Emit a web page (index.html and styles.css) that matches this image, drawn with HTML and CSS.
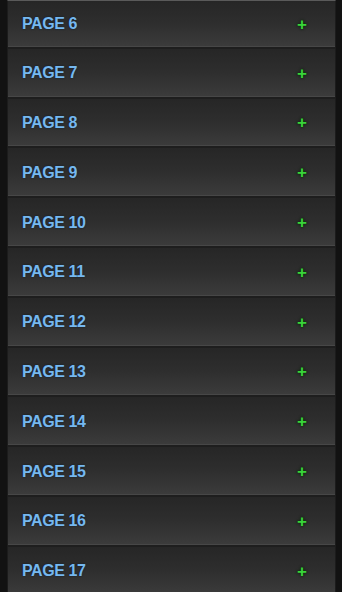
FILE: index.html
```html
<!DOCTYPE html>
<html lang="en">
<head>
    <meta charset="UTF-8">
    <meta name="viewport" content="width=device-width, initial-scale=1.0">
    <title>Pages</title>
    <link rel="stylesheet" href="styles.css">
</head>
<body>
    <div class="page-list">
        <div class="item"><span class="title">PAGE 6</span><span class="plus">+</span></div>
        <div class="item"><span class="title">PAGE 7</span><span class="plus">+</span></div>
        <div class="item"><span class="title">PAGE 8</span><span class="plus">+</span></div>
        <div class="item"><span class="title">PAGE 9</span><span class="plus">+</span></div>
        <div class="item"><span class="title">PAGE 10</span><span class="plus">+</span></div>
        <div class="item"><span class="title">PAGE 11</span><span class="plus">+</span></div>
        <div class="item"><span class="title">PAGE 12</span><span class="plus">+</span></div>
        <div class="item"><span class="title">PAGE 13</span><span class="plus">+</span></div>
        <div class="item"><span class="title">PAGE 14</span><span class="plus">+</span></div>
        <div class="item"><span class="title">PAGE 15</span><span class="plus">+</span></div>
        <div class="item"><span class="title">PAGE 16</span><span class="plus">+</span></div>
        <div class="item"><span class="title">PAGE 17</span><span class="plus">+</span></div>
    </div>
</body>
</html>
```

FILE: styles.css
```css
body {
    margin: 0;
    height: 100vh;
    overflow: hidden;
    background-color: #121212;
    font-family: "Liberation Sans", Arial, sans-serif;
}

/* Page list */
.page-list {
    margin: 0 6px 0 7px;
    background-color: #1e1e1e;
    border-top: 1px solid #5a5a5a;
    border-left: 1px solid #1c1c1c;
    border-right: 1px solid #1c1c1c;
}
.page-list .item {
    display: flex;
    align-items: center;
    justify-content: space-between;
    box-sizing: border-box;
    height: 47.8px;
    padding: 2px 28px 0 14px;
    background: linear-gradient(to bottom, #262626 0%, #2e2e2e 50%, #3b3b3b 100%);
    border-bottom: 1px solid #474747;
    margin-bottom: 2px;
}
.page-list .item:first-child {
    height: 45.8px;
}
.page-list .item .title {
    color: #76b8ef;
    font-size: 16px;
    font-weight: bold;
    letter-spacing: -0.4px;
    text-shadow: 0 0 2px #0b1a2a;
}
.page-list .item .plus {
    color: #3ad43a;
    font-size: 17px;
    font-weight: bold;
    line-height: 1;
    text-shadow: 0 0 3px #0a2a0a, 0 0 2px #0a2a0a;
}
```
